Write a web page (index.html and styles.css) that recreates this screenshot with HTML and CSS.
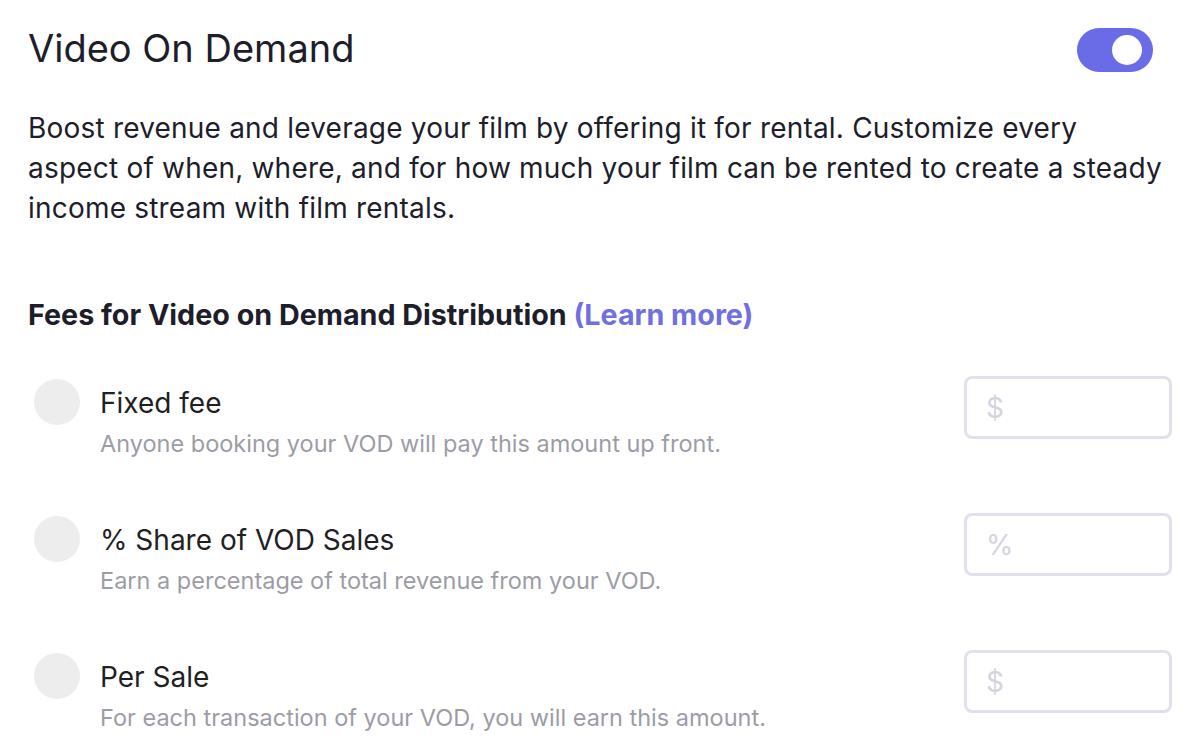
FILE: index.html
```html
<!DOCTYPE html>
<html lang="en">
<head>
    <meta charset="UTF-8">
    <title>Video On Demand</title>
    <link rel="stylesheet" href="styles.css">
</head>
<body>
    <div class="panel">
        <div class="header">
            <h1 class="title">Video On Demand</h1>
            <div class="toggle on"><span class="knob"></span></div>
        </div>

        <p class="intro">Boost revenue and leverage your film by offering it for rental. Customize every aspect of when, where, and for how much your film can be rented to create a steady income stream with film rentals.</p>

        <h2 class="fees-title">Fees for Video on Demand Distribution <a class="learn" href="#">(Learn more)</a></h2>

        <div class="fee-list">
            <div class="fee-row">
                <span class="radio"></span>
                <div class="fee-text">
                    <div class="fee-name">Fixed fee</div>
                    <div class="fee-desc">Anyone booking your VOD will pay this amount up front.</div>
                </div>
                <label class="amount"><span class="unit">$</span><input type="text"></label>
            </div>
            <div class="fee-row">
                <span class="radio"></span>
                <div class="fee-text">
                    <div class="fee-name">% Share of VOD Sales</div>
                    <div class="fee-desc">Earn a percentage of total revenue from your VOD.</div>
                </div>
                <label class="amount"><span class="unit">%</span><input type="text"></label>
            </div>
            <div class="fee-row">
                <span class="radio"></span>
                <div class="fee-text">
                    <div class="fee-name">Per Sale</div>
                    <div class="fee-desc">For each transaction of your VOD, you will earn this amount.</div>
                </div>
                <label class="amount"><span class="unit">$</span><input type="text"></label>
            </div>
        </div>
    </div>
</body>
</html>
```

FILE: styles.css
```css
body {
    margin: 0;
    background-color: #fff;
    font-family: Inter, "Noto Sans", sans-serif;
    color: #1d1d2c;
}
.panel {
    padding: 26px 28px 0 28px;
}
.header {
    display: flex;
    justify-content: space-between;
    align-items: flex-start;
    height: 44px;
}
.title {
    margin: 0;
    font-size: 38px;
    font-weight: 400;
    line-height: 44px;
}
.toggle {
    position: relative;
    width: 76px;
    height: 44px;
    margin: 2px 19px 0 0;
    border-radius: 22px;
    background-color: #d8d8e2;
}
.toggle.on {
    background-color: #6a6be6;
}
.toggle .knob {
    position: absolute;
    top: 7px;
    right: 11px;
    width: 30px;
    height: 30px;
    border-radius: 50%;
    background-color: #fff;
}
.intro {
    max-width: 1144px;
    margin: 38px 0 0 0;
    font-size: 28px;
    line-height: 40px;
    letter-spacing: 0.2px;
    color: #1d1d2c;
}
.fees-title {
    margin: 70px 0 0 0;
    font-size: 28.7px;
    font-weight: 700;
    line-height: 34px;
}
.learn {
    color: #7070e0;
    text-decoration: none;
}
.fee-list {
    margin-top: 44px;
}
.fee-row {
    display: flex;
    align-items: flex-start;
    margin-bottom: 54px;
}
.radio {
    flex: none;
    width: 46px;
    height: 46px;
    margin: 3px 20px 0 6px;
    border-radius: 50%;
    background-color: #ededee;
}
.fee-text {
    flex: 1;
    margin-top: 10px;
}
.fee-name {
    font-size: 28px;
    line-height: 34px;
    color: #1f1f24;
}
.fee-desc {
    margin-top: 9px;
    font-size: 23.5px;
    line-height: 30px;
    color: #9c9ca6;
}
.amount {
    flex: none;
    display: flex;
    align-items: center;
    box-sizing: border-box;
    width: 208px;
    height: 63px;
    padding: 0 19px;
    border: 3px solid #e1e1ee;
    border-radius: 8px;
}
.unit {
    font-size: 28px;
    color: #d4d4de;
    margin-right: 6px;
}
.amount input {
    flex: 1;
    min-width: 0;
    border: none;
    outline: none;
    font-family: inherit;
    font-size: 24px;
    background: transparent;
}
```
